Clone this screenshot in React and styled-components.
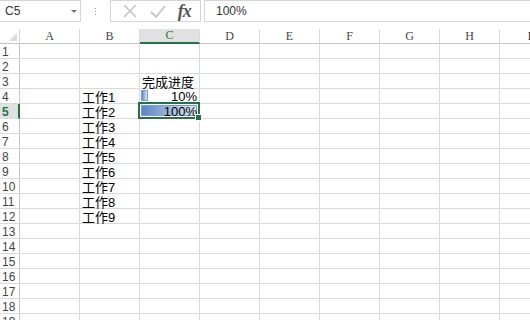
import React from 'react';
import styled, { createGlobalStyle } from 'styled-components';

const GlobalStyle = createGlobalStyle`
  html, body { margin: 0; padding: 0; background: #fff; }
  body { width: 530px; height: 320px; overflow: hidden; }
`;

const Page = styled.div`
  width: 530px;
  height: 320px;
  overflow: hidden;
  background: #fff;
  font-family: "Liberation Sans", "Noto Sans CJK SC", sans-serif;
`;

const FormulaBar = styled.div`
  display: flex;
  align-items: stretch;
  height: 22px;
  margin-bottom: 7px;
`;

const NameBox = styled.div`
  width: 81px;
  box-sizing: border-box;
  border: 1px solid #d5d5d5;
  border-left: none;
  display: flex;
  align-items: center;
  justify-content: space-between;
  padding: 0 3px 0 5px;
  font-size: 12px;
  color: #333;
`;

const Caret = styled.span`
  width: 0;
  height: 0;
  border-left: 3px solid transparent;
  border-right: 3px solid transparent;
  border-top: 3px solid #777;
`;

const Dots = styled.div`
  width: 29px;
  display: flex;
  flex-direction: column;
  align-items: center;
  justify-content: center;
  gap: 2px;
  span {
    width: 1px;
    height: 1px;
    background: #999;
  }
`;

const ButtonBox = styled.div`
  width: 91px;
  box-sizing: border-box;
  border: 1px solid #d5d5d5;
  display: flex;
  align-items: center;
  justify-content: space-around;
  padding: 0 4px 0 6px;
`;

const Fx = styled.span`
  font-family: "Liberation Serif", serif;
  font-style: italic;
  font-weight: bold;
  font-size: 18px;
  color: #555;
  letter-spacing: -1px;
`;

const FormulaInput = styled.div`
  flex: 1;
  margin-left: 3px;
  box-sizing: border-box;
  border: 1px solid #d5d5d5;
  border-right: none;
  display: flex;
  align-items: center;
  padding-left: 11px;
  font-size: 12px;
  color: #333;
`;

const Grid = styled.div`
  display: grid;
  grid-template-columns: 20px repeat(9, 60px);
  grid-auto-rows: 15px;
`;

const Corner = styled.div`
  position: relative;
  box-sizing: border-box;
  border-right: 1px solid #d5d5d5;
  border-bottom: 1px solid #c6c6c6;
  &::after {
    content: "";
    position: absolute;
    right: 2px;
    bottom: 2px;
    border-left: 8px solid transparent;
    border-bottom: 8px solid #dcdcdc;
  }
`;

const ColHead = styled.div`
  box-sizing: border-box;
  display: flex;
  align-items: center;
  justify-content: center;
  font-family: "Liberation Serif", serif;
  font-size: 12px;
  color: ${p => (p.$active ? '#217346' : '#444')};
  background: ${p => (p.$active ? '#e1e1e1' : '#fff')};
  border-right: 1px solid #dadada;
  border-bottom: ${p => (p.$active ? '2px solid #217346' : '1px solid #c6c6c6')};
`;

const RowHead = styled.div`
  box-sizing: border-box;
  display: flex;
  align-items: center;
  padding: 1px 0 0 2px;
  font-size: 12px;
  font-weight: ${p => (p.$active ? 'bold' : 'normal')};
  color: ${p => (p.$active ? '#217346' : '#444')};
  background: ${p => (p.$active ? '#e1e1e1' : '#fff')};
  border-right: ${p => (p.$active ? '2px solid #217346' : '1px solid #c6c6c6')};
  border-bottom: 1px solid #dadada;
`;

const Cell = styled.div`
  position: relative;
  box-sizing: border-box;
  display: flex;
  align-items: center;
  justify-content: ${p => (p.$right ? 'flex-end' : 'flex-start')};
  padding: 0 2px;
  font-size: 13px;
  color: #000;
  white-space: nowrap;
  border-right: 1px solid #dadada;
  border-bottom: 1px solid #dadada;
`;

const CellText = styled.span`
  position: relative;
  z-index: 1;
`;

const DataBar = styled.div`
  position: absolute;
  left: 1px;
  top: 1px;
  bottom: 2px;
  box-sizing: border-box;
  border: 1px solid #7a9ed2;
  background: linear-gradient(to right, #5b86c5, #dfe7f5);
`;

const Selection = styled.div`
  position: absolute;
  left: -2px;
  top: -2px;
  right: -1px;
  bottom: -1px;
  border: 2px solid #217346;
  z-index: 2;
  pointer-events: none;
  &::after {
    content: "";
    position: absolute;
    right: -4px;
    bottom: -4px;
    width: 5px;
    height: 5px;
    background: #217346;
    border: 1px solid #fff;
  }
`;

const cols = ['A', 'B', 'C', 'D', 'E', 'F', 'G', 'H', 'I'];

const data = {
  '3C': { text: '完成进度' },
  '4C': { text: '10%', bar: 10 },
  '5C': { text: '100%', bar: 100 },
  '4B': { text: '工作1' },
  '5B': { text: '工作2' },
  '6B': { text: '工作3' },
  '7B': { text: '工作4' },
  '8B': { text: '工作5' },
  '9B': { text: '工作6' },
  '10B': { text: '工作7' },
  '11B': { text: '工作8' },
  '12B': { text: '工作9' },
};

const rows = Array.from({ length: 19 }, (_, i) => i + 1);

function App() {
  return (
    <Page>
      <GlobalStyle />
      <FormulaBar>
        <NameBox>
          C5
          <Caret />
        </NameBox>
        <Dots>
          <span />
          <span />
          <span />
        </Dots>
        <ButtonBox>
          <svg width="16" height="16" viewBox="0 0 16 16">
            <path d="M2 2 L14 14 M14 2 L2 14" stroke="#c4c4c4" strokeWidth="1.6" fill="none" />
          </svg>
          <svg width="18" height="16" viewBox="0 0 18 16">
            <path d="M2 9 L7 14 L16 3" stroke="#c4c4c4" strokeWidth="1.8" fill="none" />
          </svg>
          <Fx>fx</Fx>
        </ButtonBox>
        <FormulaInput>100%</FormulaInput>
      </FormulaBar>
      <Grid>
        <Corner />
        {cols.map(c => (
          <ColHead key={c} $active={c === 'C'}>{c}</ColHead>
        ))}
        {rows.map(r => (
          <React.Fragment key={r}>
            <RowHead $active={r === 5}>{r}</RowHead>
            {cols.map(c => {
              const d = data[`${r}${c}`];
              const right = d && d.bar !== undefined;
              return (
                <Cell key={c} $right={right}>
                  {d && d.bar !== undefined && (
                    <DataBar style={{ width: `${Math.max(d.bar, 12) * 0.95}%` }} />
                  )}
                  {d && <CellText>{d.text}</CellText>}
                  {r === 5 && c === 'C' && <Selection />}
                </Cell>
              );
            })}
          </React.Fragment>
        ))}
      </Grid>
    </Page>
  );
}

export default App;
